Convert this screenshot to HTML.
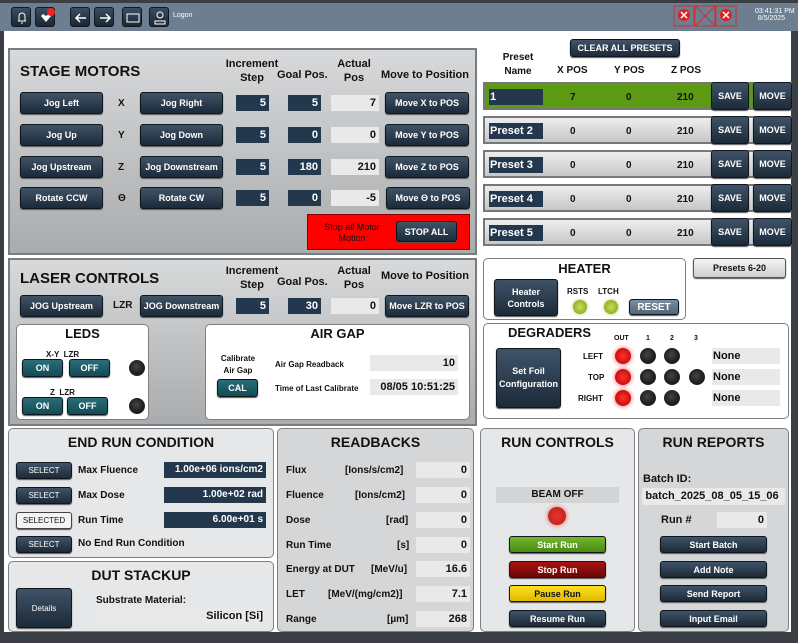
<!DOCTYPE html><html><head><meta charset="utf-8"><style>
*{box-sizing:border-box;margin:0;padding:0}
body{width:798px;height:643px;background:#3a3f46;font-family:"Liberation Sans",sans-serif;position:relative;overflow:hidden;font-weight:bold;color:#111}
.a{position:absolute}
.top{left:0;top:3px;width:798px;height:28px;background:#6d7e91}
.main{left:4px;top:31px;width:787px;height:601px;background:#fff}
.ib{position:absolute;top:7px;width:20px;height:20px;border-radius:3px;background:linear-gradient(#3b4d60,#1b2733);border:1px solid #11181f}
.panel{position:absolute;border:2px solid #7a7d80;background:linear-gradient(#d8d9da,#a9abad)}
.box{position:absolute;border:1px solid #7d7f82;border-radius:5px;background:#fff}
.gpan{position:absolute;border:1px solid #7d7f82;border-radius:5px;background:#e6e7e8}
.btn{position:absolute;background:linear-gradient(#3f5368,#1c2a38);border:1px solid #0f161d;border-radius:3px;color:#fff;font-size:9px;display:flex;align-items:center;justify-content:center;text-align:center;box-shadow:0 1px 1px #555}
.in{position:absolute;background:#23384d;color:#fff;font-size:11px;text-align:right;padding-right:3px;height:16px;line-height:16px}
.ro{position:absolute;background:#e9e9ea;font-size:11px;text-align:right;padding-right:3px;height:16px;line-height:16px}
.t{position:absolute;white-space:nowrap}
.c{text-align:center}
.led{position:absolute;width:16px;height:16px;border-radius:50%;background:radial-gradient(circle at 45% 40%,#444,#0a0a0a);border:1px solid #222}
.red{background:radial-gradient(circle,#ff3030,#b00000);box-shadow:0 0 5px #f44;border:none}
.grn{background:radial-gradient(circle,#c8e050,#7a9a20);box-shadow:0 0 3px #9c4;border:none}
.row{position:absolute;left:483px;width:309px;height:28px;border:2px solid #777;background:linear-gradient(#eee,#c6c7c8)}
.teal{background:linear-gradient(#2a6e7a,#124b55)}
</style></head><body>
<div class="a top"></div>
<div class="ib" style="left:11px"><svg width="20" height="20"><path d="M6 13h8M7 13V8a3 3 0 0 1 6 0v5M9 15h2" stroke="#fff" fill="none"/></svg></div>
<div class="ib" style="left:35px"><svg width="20" height="20"><path d="M5 8l5 6 5-6-2-2-3 2-3-2z" fill="#fff"/><circle cx="15" cy="4" r="4" fill="#e22"/></svg></div>
<div class="ib" style="left:70px"><svg width="20" height="20"><path d="M15 10H5M9 6l-4 4 4 4" stroke="#fff" fill="none" stroke-width="1.5"/></svg></div>
<div class="ib" style="left:94px"><svg width="20" height="20"><path d="M5 10h10M11 6l4 4-4 4" stroke="#fff" fill="none" stroke-width="1.5"/></svg></div>
<div class="ib" style="left:122px"><svg width="20" height="20"><rect x="4" y="6" width="12" height="8" stroke="#fff" fill="none"/></svg></div>
<div class="ib" style="left:149px"><svg width="20" height="20"><circle cx="10" cy="7" r="3" stroke="#fff" fill="none"/><path d="M5 16v-3h10v3z" stroke="#fff" fill="none"/></svg></div>
<div class="t" style="left:173px;top:12px;font-size:7px;color:#fff;font-weight:normal">Logon</div>
<svg class="a" style="left:673px;top:5px" width="80" height="22"><g stroke="#c33" fill="none"><rect x="1" y="1" width="20" height="20"/><rect x="22" y="1" width="20" height="20"/><rect x="43" y="1" width="20" height="20"/><path d="M22 1l20 20M42 1L22 21"/></g><circle cx="11" cy="10" r="6" fill="#d22"/><circle cx="53" cy="10" r="6" fill="#d22"/><path d="M8 7l6 6M14 7l-6 6M50 7l6 6M56 7l-6 6" stroke="#fff" stroke-width="1.5"/></svg>
<div class="t" style="left:755px;top:8px;font-size:7px;color:#fff;font-weight:normal;text-align:right;width:30px">03:41:31 PM<br>8/5/2025</div>
<div class="a main"></div>

<!-- STAGE MOTORS -->
<div class="panel" style="left:8px;top:48px;width:469px;height:207px"></div>
<div class="t" style="left:20px;top:63px;font-size:15px">STAGE MOTORS</div>
<div class="t c" style="left:222px;top:57px;width:60px;font-size:11px;line-height:14px">Increment<br>Step</div>
<div class="t" style="left:277px;top:69px;font-size:11px">Goal Pos.</div>
<div class="t c" style="left:330px;top:57px;width:48px;font-size:11px;line-height:14px">Actual<br>Pos</div>
<div class="t" style="left:381px;top:69px;font-size:11px">Move to Position</div>
<div class="btn" style="left:20px;top:92px;width:83px;height:22px">Jog Left</div>
<div class="t" style="left:118px;top:98px;font-size:10px">X</div>
<div class="btn" style="left:140px;top:92px;width:83px;height:22px">Jog Right</div>
<div class="in" style="left:236px;top:95px;width:33px">5</div><div class="in" style="left:288px;top:95px;width:33px">5</div><div class="ro" style="left:331px;top:95px;width:48px">7</div>
<div class="btn" style="left:385px;top:92px;width:84px;height:22px">Move X to POS</div>
<div class="btn" style="left:20px;top:124px;width:83px;height:22px">Jog Up</div>
<div class="t" style="left:118px;top:130px;font-size:10px">Y</div>
<div class="btn" style="left:140px;top:124px;width:83px;height:22px">Jog Down</div>
<div class="in" style="left:236px;top:127px;width:33px">5</div><div class="in" style="left:288px;top:127px;width:33px">0</div><div class="ro" style="left:331px;top:127px;width:48px">0</div>
<div class="btn" style="left:385px;top:124px;width:84px;height:22px">Move Y to POS</div>
<div class="btn" style="left:20px;top:156px;width:83px;height:22px">Jog Upstream</div>
<div class="t" style="left:118px;top:162px;font-size:10px">Z</div>
<div class="btn" style="left:140px;top:156px;width:83px;height:22px">Jog Downstream</div>
<div class="in" style="left:236px;top:159px;width:33px">5</div><div class="in" style="left:288px;top:159px;width:33px">180</div><div class="ro" style="left:331px;top:159px;width:48px">210</div>
<div class="btn" style="left:385px;top:156px;width:84px;height:22px">Move Z to POS</div>
<div class="btn" style="left:20px;top:187px;width:83px;height:22px">Rotate CCW</div>
<div class="t" style="left:118px;top:193px;font-size:10px">Θ</div>
<div class="btn" style="left:140px;top:187px;width:83px;height:22px">Rotate CW</div>
<div class="in" style="left:236px;top:190px;width:33px">5</div><div class="in" style="left:288px;top:190px;width:33px">0</div><div class="ro" style="left:331px;top:190px;width:48px">-5</div>
<div class="btn" style="left:386px;top:187px;width:84px;height:22px">Move Θ to POS</div>
<div class="a" style="left:307px;top:214px;width:163px;height:36px;background:#f00;border:1px solid #800"></div>
<div class="t c" style="left:314px;top:222px;width:76px;font-size:9px;font-weight:normal;line-height:11px">Stop all Motor<br>Motion</div>
<div class="btn" style="left:396px;top:221px;width:61px;height:21px">STOP ALL</div>

<!-- LASER -->
<div class="panel" style="left:8px;top:258px;width:469px;height:168px"></div>
<div class="t" style="left:20px;top:270px;font-size:15px">LASER CONTROLS</div>
<div class="t c" style="left:222px;top:264px;width:60px;font-size:11px;line-height:14px">Increment<br>Step</div>
<div class="t" style="left:277px;top:276px;font-size:11px">Goal Pos.</div>
<div class="t c" style="left:330px;top:264px;width:48px;font-size:11px;line-height:14px">Actual<br>Pos</div>
<div class="t" style="left:381px;top:270px;font-size:11px">Move to Position</div>
<div class="btn" style="left:20px;top:295px;width:83px;height:22px">JOG Upstream</div>
<div class="t" style="left:113px;top:300px;font-size:10px">LZR</div>
<div class="btn" style="left:140px;top:295px;width:83px;height:22px">JOG Downstream</div>
<div class="in" style="left:236px;top:298px;width:33px">5</div><div class="in" style="left:288px;top:298px;width:33px">30</div><div class="ro" style="left:331px;top:298px;width:48px">0</div>
<div class="btn" style="left:385px;top:295px;width:84px;height:22px">Move LZR to POS</div>
<div class="box" style="left:16px;top:324px;width:133px;height:96px"></div>
<div class="t c" style="left:16px;top:326px;width:133px;font-size:13px">LEDS</div>
<div class="t" style="left:46px;top:350px;font-size:8px">X-Y &nbsp;LZR</div>
<div class="btn teal" style="left:22px;top:359px;width:41px;height:18px">ON</div><div class="btn teal" style="left:69px;top:359px;width:41px;height:18px">OFF</div>
<div class="led" style="left:129px;top:360px"></div>
<div class="t" style="left:50px;top:388px;font-size:8px">Z &nbsp;LZR</div>
<div class="btn teal" style="left:22px;top:397px;width:41px;height:18px">ON</div><div class="btn teal" style="left:67px;top:397px;width:41px;height:18px">OFF</div>
<div class="led" style="left:129px;top:398px"></div>
<div class="box" style="left:205px;top:324px;width:265px;height:96px"></div>
<div class="t c" style="left:205px;top:326px;width:265px;font-size:13px">AIR GAP</div>
<div class="t c" style="left:210px;top:353px;width:56px;font-size:8px;line-height:12px">Calibrate<br>Air Gap</div>
<div class="btn teal" style="left:217px;top:379px;width:41px;height:18px">CAL</div>
<div class="t" style="left:275px;top:360px;font-size:8px">Air Gap Readback</div>
<div class="ro" style="left:370px;top:355px;width:88px;height:16px">10</div>
<div class="t" style="left:275px;top:384px;font-size:8px">Time of Last Calibrate</div>
<div class="ro" style="left:370px;top:379px;width:88px;height:16px">08/05 10:51:25</div>

<!-- END RUN -->
<div class="gpan" style="left:8px;top:428px;width:266px;height:130px"></div>
<div class="t c" style="left:8px;top:434px;width:266px;font-size:14px">END RUN CONDITION</div>
<div class="btn" style="left:16px;top:462px;width:56px;height:17px;font-weight:normal;font-size:8px">SELECT</div>
<div class="t" style="left:78px;top:465px;font-size:10px">Max Fluence</div>
<div class="in" style="left:164px;top:462px;width:102px;font-size:10px">1.00e+06 ions/cm2</div>
<div class="btn" style="left:16px;top:487px;width:56px;height:17px;font-weight:normal;font-size:8px">SELECT</div>
<div class="t" style="left:78px;top:490px;font-size:10px">Max Dose</div>
<div class="in" style="left:164px;top:487px;width:102px;font-size:10px">1.00e+02 rad</div>
<div class="btn" style="left:16px;top:512px;width:56px;height:17px;font-weight:normal;font-size:8px;background:#f4f4f4;color:#111;border-color:#444">SELECTED</div>
<div class="t" style="left:78px;top:515px;font-size:10px">Run Time</div>
<div class="in" style="left:164px;top:512px;width:102px;font-size:10px">6.00e+01 s</div>
<div class="btn" style="left:16px;top:536px;width:56px;height:17px;font-weight:normal;font-size:8px">SELECT</div>
<div class="t" style="left:78px;top:538px;font-size:10px">No End Run Condition</div>

<div class="gpan" style="left:8px;top:561px;width:266px;height:71px"></div>
<div class="t c" style="left:8px;top:567px;width:266px;font-size:14px">DUT STACKUP</div>
<div class="btn" style="left:16px;top:588px;width:56px;height:40px;font-weight:normal;font-size:8px">Details</div>
<div class="t" style="left:96px;top:595px;font-size:10px">Substrate Material:</div>
<div class="ro" style="left:96px;top:608px;width:170px">Silicon [Si]</div>

<!-- READBACKS -->
<div class="gpan" style="left:277px;top:428px;width:197px;height:204px;background:#d5d6d7"></div>
<div class="t c" style="left:277px;top:434px;width:197px;font-size:14px">READBACKS</div>
<div class="t" style="left:286px;top:465px;font-size:10px">Flux</div><div class="t" style="left:345px;top:465px;font-size:10px">[Ions/s/cm2]</div><div class="ro" style="left:416px;top:462px;width:54px">0</div>
<div class="t" style="left:286px;top:490px;font-size:10px">Fluence</div><div class="t" style="left:355px;top:490px;font-size:10px">[Ions/cm2]</div><div class="ro" style="left:416px;top:487px;width:54px">0</div>
<div class="t" style="left:286px;top:515px;font-size:10px">Dose</div><div class="t" style="left:386px;top:515px;font-size:10px">[rad]</div><div class="ro" style="left:416px;top:512px;width:54px">0</div>
<div class="t" style="left:286px;top:540px;font-size:10px">Run Time</div><div class="t" style="left:397px;top:540px;font-size:10px">[s]</div><div class="ro" style="left:416px;top:537px;width:54px">0</div>
<div class="t" style="left:286px;top:564px;font-size:10px">Energy at DUT</div><div class="t" style="left:371px;top:564px;font-size:10px">[MeV/u]</div><div class="ro" style="left:416px;top:561px;width:54px">16.6</div>
<div class="t" style="left:286px;top:589px;font-size:10px">LET</div><div class="t" style="left:328px;top:589px;font-size:10px">[MeV/(mg/cm2)]</div><div class="ro" style="left:416px;top:586px;width:54px">7.1</div>
<div class="t" style="left:286px;top:614px;font-size:10px">Range</div><div class="t" style="left:387px;top:614px;font-size:10px">[µm]</div><div class="ro" style="left:416px;top:611px;width:54px">268</div>

<!-- RUN CONTROLS -->
<div class="gpan" style="left:480px;top:428px;width:155px;height:204px"></div>
<div class="t c" style="left:480px;top:434px;width:155px;font-size:14px">RUN CONTROLS</div>
<div class="a c" style="left:496px;top:487px;width:123px;height:16px;background:#d3d4d5;font-size:10px;line-height:16px">BEAM OFF</div>
<div class="led red" style="left:548px;top:507px;width:18px;height:18px;background:radial-gradient(circle,#e33,#a21);"></div>
<div class="btn" style="left:509px;top:536px;width:97px;height:17px;background:linear-gradient(#72b82a,#4a8a12)">Start Run</div>
<div class="btn" style="left:509px;top:561px;width:97px;height:17px;background:linear-gradient(#a11,#6a0808)">Stop Run</div>
<div class="btn" style="left:509px;top:585px;width:97px;height:17px;background:linear-gradient(#ffe020,#e0b800);color:#111">Pause Run</div>
<div class="btn" style="left:509px;top:610px;width:97px;height:17px">Resume Run</div>

<!-- RUN REPORTS -->
<div class="gpan" style="left:638px;top:428px;width:151px;height:204px;background:#d5d6d7"></div>
<div class="t c" style="left:638px;top:434px;width:151px;font-size:14px">RUN REPORTS</div>
<div class="t" style="left:643px;top:473px;font-size:11px">Batch ID:</div>
<div class="ro" style="left:642px;top:488px;width:143px;text-align:center;font-size:11px;height:17px">batch_2025_08_05_15_06</div>
<div class="t" style="left:661px;top:514px;font-size:11px">Run #</div>
<div class="ro" style="left:717px;top:512px;width:50px">0</div>
<div class="btn" style="left:660px;top:536px;width:107px;height:17px">Start Batch</div>
<div class="btn" style="left:660px;top:561px;width:107px;height:17px">Add Note</div>
<div class="btn" style="left:660px;top:585px;width:107px;height:17px">Send Report</div>
<div class="btn" style="left:660px;top:610px;width:107px;height:17px">Input Email</div>

<!-- PRESETS -->
<div class="btn" style="left:570px;top:39px;width:110px;height:18px">CLEAR ALL PRESETS</div>
<div class="t c" style="left:495px;top:51px;width:46px;font-size:10px;line-height:14px">Preset<br>Name</div>
<div class="t" style="left:557px;top:65px;font-size:10px">X POS</div>
<div class="t" style="left:614px;top:65px;font-size:10px">Y POS</div>
<div class="t" style="left:671px;top:65px;font-size:10px">Z POS</div>

<div class="row" style="top:82px;background:#5c9a14"></div>
<div class="in" style="left:489px;top:89px;width:54px;text-align:left;padding-left:1px">1</div>
<div class="t" style="left:570px;top:92px;font-size:10px">7</div><div class="t" style="left:626px;top:92px;font-size:10px">0</div><div class="t" style="left:677px;top:92px;font-size:10px">210</div>
<div class="btn" style="left:711px;top:82px;width:38px;height:28px">SAVE</div><div class="btn" style="left:753px;top:82px;width:39px;height:28px">MOVE</div>

<div class="row" style="top:116px"></div>
<div class="in" style="left:489px;top:123px;width:54px;text-align:left;padding-left:1px;font-size:11px">Preset 2</div>
<div class="t" style="left:570px;top:126px;font-size:10px">0</div><div class="t" style="left:626px;top:126px;font-size:10px">0</div><div class="t" style="left:677px;top:126px;font-size:10px">210</div>
<div class="btn" style="left:711px;top:116px;width:38px;height:28px">SAVE</div><div class="btn" style="left:753px;top:116px;width:39px;height:28px">MOVE</div>

<div class="row" style="top:150px"></div>
<div class="in" style="left:489px;top:157px;width:54px;text-align:left;padding-left:1px;font-size:11px">Preset 3</div>
<div class="t" style="left:570px;top:160px;font-size:10px">0</div><div class="t" style="left:626px;top:160px;font-size:10px">0</div><div class="t" style="left:677px;top:160px;font-size:10px">210</div>
<div class="btn" style="left:711px;top:150px;width:38px;height:28px">SAVE</div><div class="btn" style="left:753px;top:150px;width:39px;height:28px">MOVE</div>

<div class="row" style="top:184px"></div>
<div class="in" style="left:489px;top:191px;width:54px;text-align:left;padding-left:1px;font-size:11px">Preset 4</div>
<div class="t" style="left:570px;top:194px;font-size:10px">0</div><div class="t" style="left:626px;top:194px;font-size:10px">0</div><div class="t" style="left:677px;top:194px;font-size:10px">210</div>
<div class="btn" style="left:711px;top:184px;width:38px;height:28px">SAVE</div><div class="btn" style="left:753px;top:184px;width:39px;height:28px">MOVE</div>

<div class="row" style="top:218px"></div>
<div class="in" style="left:489px;top:225px;width:54px;text-align:left;padding-left:1px;font-size:11px">Preset 5</div>
<div class="t" style="left:570px;top:228px;font-size:10px">0</div><div class="t" style="left:626px;top:228px;font-size:10px">0</div><div class="t" style="left:677px;top:228px;font-size:10px">210</div>
<div class="btn" style="left:711px;top:218px;width:38px;height:28px">SAVE</div><div class="btn" style="left:753px;top:218px;width:39px;height:28px">MOVE</div>

<!-- HEATER -->
<div class="box" style="left:483px;top:258px;width:203px;height:62px"></div>
<div class="t c" style="left:483px;top:261px;width:203px;font-size:13px">HEATER</div>
<div class="btn" style="left:494px;top:279px;width:64px;height:37px;line-height:12px">Heater<br>Controls</div>
<div class="t" style="left:567px;top:287px;font-size:8px">RSTS</div>
<div class="t" style="left:598px;top:287px;font-size:8px">LTCH</div>
<div class="led grn" style="left:573px;top:300px;width:14px;height:14px"></div>
<div class="led grn" style="left:604px;top:300px;width:14px;height:14px"></div>
<div class="btn" style="left:629px;top:299px;width:50px;height:16px;background:linear-gradient(#7a8ea0,#50647a);font-size:10px">RESET</div>
<div class="btn" style="left:693px;top:258px;width:93px;height:20px;background:linear-gradient(#f4f4f4,#d0d0d0);color:#111;border-color:#555">Presets 6-20</div>

<!-- DEGRADERS -->
<div class="box" style="left:483px;top:323px;width:306px;height:96px"></div>
<div class="t" style="left:508px;top:325px;font-size:13px">DEGRADERS</div>
<div class="t" style="left:614px;top:335px;font-size:7px">OUT</div>
<div class="t" style="left:646px;top:335px;font-size:7px">1</div>
<div class="t" style="left:670px;top:335px;font-size:7px">2</div>
<div class="t" style="left:694px;top:335px;font-size:7px">3</div>
<div class="btn" style="left:496px;top:348px;width:65px;height:60px;line-height:13px">Set Foil<br>Configuration</div>
<div class="t" style="left:583px;top:352px;font-size:8px">LEFT</div>
<div class="t" style="left:588px;top:373px;font-size:8px">TOP</div>
<div class="t" style="left:578px;top:394px;font-size:8px">RIGHT</div>
<div class="led red" style="left:615px;top:348px"></div><div class="led" style="left:640px;top:348px"></div><div class="led" style="left:664px;top:348px"></div>
<div class="led red" style="left:615px;top:369px"></div><div class="led" style="left:640px;top:369px"></div><div class="led" style="left:664px;top:369px"></div><div class="led" style="left:689px;top:369px"></div>
<div class="led red" style="left:615px;top:390px"></div><div class="led" style="left:640px;top:390px"></div><div class="led" style="left:664px;top:390px"></div>
<div class="ro" style="left:712px;top:348px;width:68px;text-align:left;padding-left:1px">None</div>
<div class="ro" style="left:712px;top:369px;width:68px;text-align:left;padding-left:1px">None</div>
<div class="ro" style="left:712px;top:390px;width:68px;text-align:left;padding-left:1px">None</div>
</body></html>
